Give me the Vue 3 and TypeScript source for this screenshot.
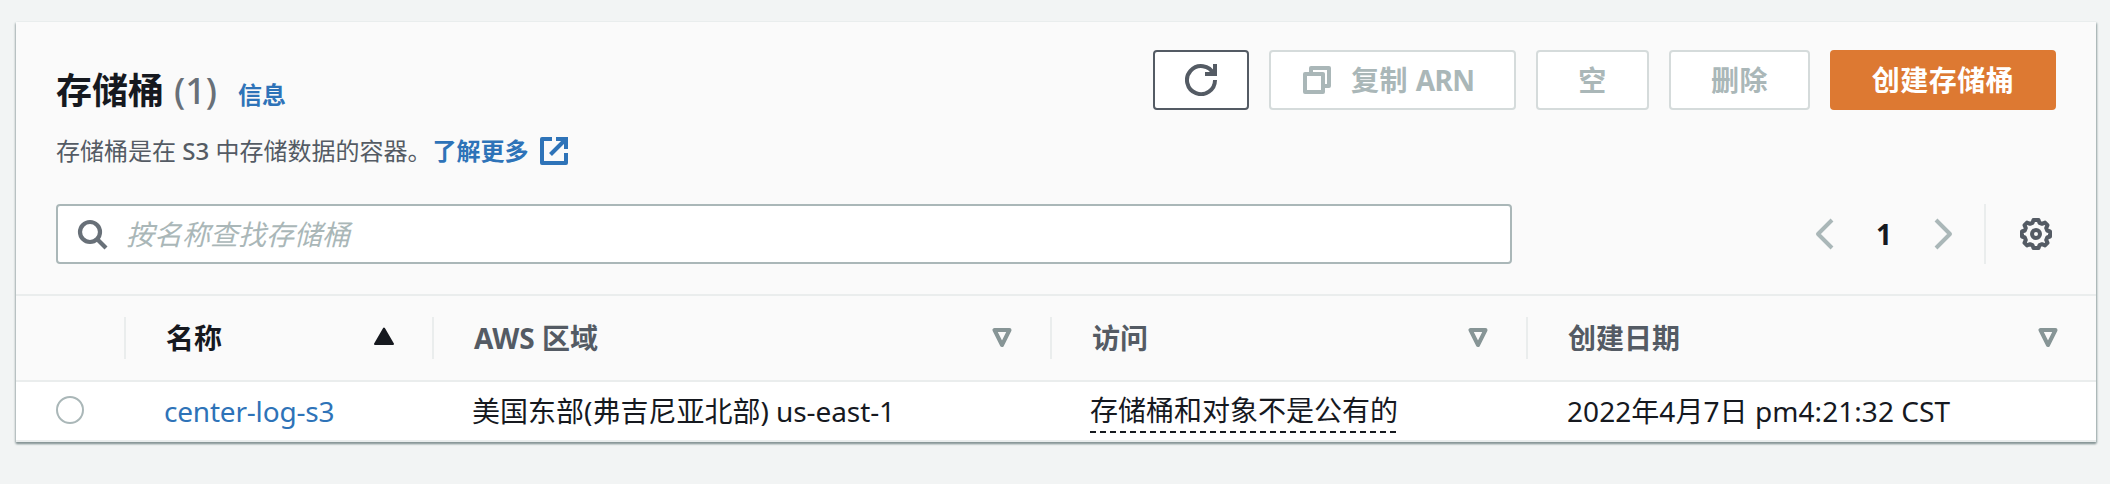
<script setup lang="ts">
type SortState = 'ascending' | 'none'

interface Column {
  label: string
  sort: SortState
}

interface Bucket {
  name: string
  region: string
  regionCode: string
  access: string
  created: string
}

const columns: Column[] = [
  { label: '名称', sort: 'ascending' },
  { label: 'AWS 区域', sort: 'none' },
  { label: '访问', sort: 'none' },
  { label: '创建日期', sort: 'none' },
]

const buckets: Bucket[] = [
  {
    name: 'center-log-s3',
    region: '美国东部(弗吉尼亚北部)',
    regionCode: 'us-east-1',
    access: '存储桶和对象不是公有的',
    created: '2022年4月7日 pm4:21:32 CST',
  },
]
</script>

<template>
  <main class="page">
    <section class="panel">
      <header class="header">
        <div class="intro">
          <div class="heading">
            <h2 class="title">存储桶</h2>
            <span class="count">({{ buckets.length }})</span>
            <a class="info">信息</a>
          </div>
          <p class="description">
            <span>存储桶是在 <span class="s3">S3</span> 中存储数据的容器。</span>
            <a class="learn">了解更多</a>
            <svg class="icon external" viewBox="0 0 32 32">
              <path d="M18 4h10v10" stroke-linejoin="miter" />
              <path d="M12.500 19.500L27 5" />
              <path d="M28 18v10H4V4h10" />
            </svg>
          </p>
        </div>
        <div class="actions">
          <button class="btn btn-refresh" aria-label="refresh">
            <svg class="icon" viewBox="0 0 16 16">
              <path d="M10 5h5V0" stroke-linejoin="miter" />
              <path d="M15 8a7 7 0 1 1-.7-3" stroke-linejoin="miter" />
            </svg>
          </button>
          <button class="btn btn-copy" disabled>
            <svg class="icon" viewBox="0 0 16 16">
              <path d="M2 5h9v9H2z" />
              <path d="M5 5V2h9v9h-3" />
            </svg>
            <span>复制 <span class="arn">ARN</span></span>
          </button>
          <button class="btn btn-empty" disabled>空</button>
          <button class="btn btn-delete" disabled>删除</button>
          <button class="btn btn-create">创建存储桶</button>
        </div>
      </header>

      <div class="tools">
        <label class="search">
          <svg class="icon" viewBox="0 0 16 16">
            <circle cx="7" cy="7" r="5" />
            <path d="M15 15l-4.500-4.500" />
          </svg>
          <span class="placeholder">按名称查找存储桶</span>
        </label>
        <nav class="pagination">
          <svg class="icon arrow" viewBox="0 0 16 16"><path d="M11 1L4 8l7 7" /></svg>
          <span class="page-number">1</span>
          <svg class="icon arrow" viewBox="0 0 16 16"><path d="M5 1l7 7-7 7" /></svg>
        </nav>
        <div class="settings">
          <svg class="icon" viewBox="0 0 32 32">
            <path d="M13.500 2h5l1 2.800 2.500 1 3-1.200 2.500 2.500-1.300 3 1 2.400 2.800 1v5l-2.800 1-1 2.400 1.300 3-2.500 2.500-3-1.200-2.500 1-1 2.800h-5l-1-2.800-2.500-1-3 1.200-2.500-2.500 1.300-3-1-2.400-2.800-1v-5l2.800-1 1-2.400-1.300-3L7 4.600l3 1.200 2.500-1z" />
            <circle cx="16" cy="16" r="4" />
          </svg>
        </div>
      </div>

      <div class="table">
        <div class="row head">
          <div class="cell"></div>
          <div v-for="column in columns" :key="column.label" class="cell" :class="{ sorted: column.sort === 'ascending' }">
            <span>{{ column.label }}</span>
            <svg v-if="column.sort === 'ascending'" class="sort" viewBox="0 0 20 22">
              <path d="M10 1.500l9 15.500H1z" fill="currentColor" />
            </svg>
            <svg v-else class="sort" viewBox="0 0 20 22">
              <path d="M2.500 3h15L10 18z" />
            </svg>
          </div>
        </div>
        <div v-for="bucket in buckets" :key="bucket.name" class="row body">
          <div class="cell"><span class="radio"></span></div>
          <div class="cell"><a class="name">{{ bucket.name }}</a></div>
          <div class="cell"><span>{{ bucket.region }} <span class="code">{{ bucket.regionCode }}</span></span></div>
          <div class="cell"><span class="access">{{ bucket.access }}</span></div>
          <div class="cell"><span class="date">{{ bucket.created }}</span></div>
        </div>
      </div>
    </section>
  </main>
</template>

<style>
body {
  background: #f2f4f4;
}
</style>

<style scoped>
* {
  box-sizing: border-box;
}

.page {
  height: 484px;
  padding: 22px 14px 0 16px;
  background: #f2f4f4;
  color: #16191f;
  font: 28px/44px 'Noto Sans', 'Noto Sans CJK SC', sans-serif;
  white-space: nowrap;
}

.panel {
  height: 420px;
  background: #fafafa;
  box-shadow: 0 2px 2px #879596, 1px 1px 2px #aab7b8, -1px 1px 2px #c5cccd;
}

.header {
  display: flex;
  justify-content: space-between;
  height: 182px;
  padding: 28px 40px 0;
}

.heading {
  display: flex;
  align-items: baseline;
  height: 79px;
  padding-top: 17px;
}

.title {
  margin: 0;
  font-size: 36px;
  font-weight: 700;
  line-height: 48px;
}

.count {
  margin-left: 10px;
  color: #687078;
  font-size: 36px;
  font-weight: 500;
}

.info {
  margin-left: 21px;
  color: #2e73b8;
  font-size: 24px;
  font-weight: 700;
}

.description {
  display: flex;
  align-items: center;
  margin: 0;
  color: #545b64;
  font-size: 24px;
}

.s3 {
  font-weight: 500;
}

.learn {
  margin-left: 1px;
  color: #2e73b8;
  font-weight: 700;
}

.icon {
  flex: none;
  width: 32px;
  height: 32px;
  fill: none;
  stroke: currentColor;
  stroke-width: 2;
  stroke-linejoin: round;
}

.external {
  margin-left: 10px;
  color: #2e73b8;
  stroke-width: 4;
}

.actions {
  display: flex;
  gap: 20px;
}

.btn {
  display: flex;
  align-items: center;
  justify-content: center;
  height: 60px;
  padding: 0;
  border: 2px solid #d5dbdb;
  border-radius: 4px;
  background: #fff;
  color: #aab7b8;
  font: inherit;
  font-weight: 700;
  letter-spacing: 0.5px;
}

.btn-refresh {
  width: 96px;
  border-color: #545b64;
  color: #545b64;
}

.btn-copy {
  justify-content: flex-start;
  gap: 18px;
  width: 247px;
  padding-left: 30px;
}

.arn {
  letter-spacing: -0.7px;
}

.btn-empty {
  width: 113px;
}

.btn-delete {
  width: 141px;
}

.btn-create {
  width: 226px;
  border-color: #dd7932;
  background: #dd7932;
  color: #fff;
}

.tools {
  display: flex;
  align-items: center;
  height: 90px;
  padding: 0 40px 30px;
}

.search {
  display: flex;
  align-items: center;
  width: 1456px;
  height: 60px;
  padding-left: 18px;
  border: 2px solid #aab7b8;
  border-radius: 4px;
  background: #fff;
  color: #687078;
}

.search .icon {
  stroke-width: 2.100;
}

.placeholder {
  margin-left: 18px;
  color: #aab7b8;
  font-style: italic;
}

.pagination {
  display: flex;
  align-items: center;
  justify-content: space-between;
  width: 148px;
  margin-left: auto;
  color: #16191f;
  font-weight: 700;
}

.arrow {
  color: #aab7b8;
}

.settings {
  display: flex;
  align-items: center;
  justify-content: flex-end;
  width: 72px;
  height: 60px;
  margin-left: 26px;
  padding-right: 4px;
  border-left: 2px solid #eaeded;
  color: #545b64;
}

.settings .icon {
  stroke-width: 4;
}

.row {
  display: grid;
  grid-template-columns: 110px 308px 618px 476px 1fr;
}

.head {
  align-items: center;
  height: 88px;
  border-top: 2px solid #eaeded;
  border-bottom: 2px solid #eaeded;
  color: #545b64;
  font-weight: 700;
}

.head .cell {
  display: flex;
  align-items: center;
  justify-content: space-between;
  height: 42px;
  padding: 0 38px 0 40px;
  border-right: 2px solid #eaeded;
}

.head .cell:last-child {
  border-right: 0;
}

.head .sorted {
  color: #16191f;
}

.sort {
  width: 20px;
  height: 22px;
  color: #879596;
  fill: none;
  stroke: currentColor;
  stroke-width: 4;
  stroke-linejoin: round;
}

.sorted .sort {
  color: #16191f;
  stroke-width: 2;
}

.body {
  height: 60px;
  border-bottom: 2px solid #eaeded;
  background: #fff;
}

.body .cell {
  display: flex;
  align-items: center;
  padding-left: 38px;
}

.body .cell:first-child {
  padding: 0 0 2px 40px;
}

.radio {
  width: 28px;
  height: 28px;
  border: 2px solid #aab7b8;
  border-radius: 50%;
  background: #fff;
}

.name {
  color: #2e73b8;
  letter-spacing: -0.2px;
}

.code {
  letter-spacing: -0.1px;
}

.access {
  height: 44px;
  line-height: 42px;
  background: repeating-linear-gradient(90deg, #16191f 0 6px, transparent 6px 10px) left bottom / 100% 2px no-repeat;
}

.date {
  padding-left: 1px;
  letter-spacing: 0.060px;
}
</style>
